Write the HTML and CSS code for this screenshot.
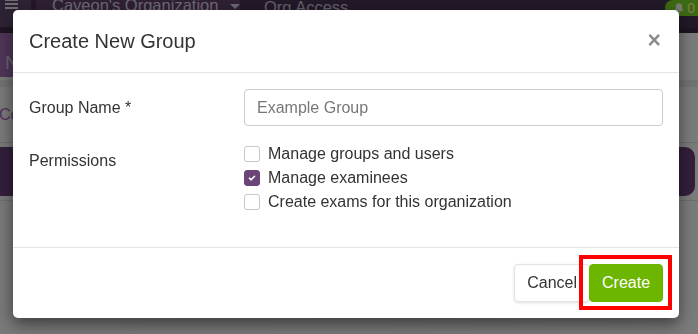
FILE: index.html
```html
<!DOCTYPE html>
<html lang="en">

<head>
  <meta charset="UTF-8" />
  <meta name="viewport" content="width=device-width, initial-scale=1.0" />
  <title>Create New Group</title>
  <link rel="stylesheet" href="styles.css">
</head>

<body>
  <div class="app">
    <header class="topbar">
      <div class="menu">
        <span class="menu-bar"></span>
        <span class="menu-bar"></span>
        <span class="menu-bar"></span>
      </div>
      <div class="org-switch">Caveon's Organization <span class="caret"></span></div>
      <a class="nav-link">Org Access</a>
      <div class="notify">
        <svg class="bell" viewBox="0 0 16 16" width="12" height="12">
          <path d="M8 1.5c-2.6 0-4.3 2-4.3 4.6v3.2L2.2 11.6v.8h11.6v-.8l-1.5-2.3V6.1C12.3 3.5 10.6 1.5 8 1.5zM6.4 13.3a1.6 1.6 0 0 0 3.2 0z" fill="currentColor" />
        </svg>
        <span class="notify-count">0</span>
      </div>
    </header>
    <div class="topbar-edge"></div>

    <div class="page-title">New Group</div>
    <div class="crumbs">
      <a class="crumb">Console</a>
    </div>
    <div class="panel-head"></div>
    <div class="panel-body"></div>
  </div>

  <div class="backdrop">
    <div class="modal">
      <div class="modal-header">
        <h4 class="modal-title">Create New Group</h4>
        <button class="close" type="button">&times;</button>
      </div>

      <div class="modal-body">
        <div class="form-row form-row-center">
          <label for="groupName" class="form-label">Group Name *</label>
          <input type="text" class="input" id="groupName" placeholder="Example Group">
        </div>

        <div class="form-row">
          <div class="form-label form-label-offset">Permissions</div>
          <div class="checks">
            <label class="check">
              <span class="box"></span>
              Manage groups and users
            </label>
            <label class="check">
              <span class="box box-on">
                <svg viewBox="0 0 10 10" width="8" height="8">
                  <path d="M1.8 5.2 4 7.3 8.2 2.8" fill="none" stroke="#fff" stroke-width="1.9" stroke-linecap="round" stroke-linejoin="round" />
                </svg>
              </span>
              Manage examinees
            </label>
            <label class="check">
              <span class="box"></span>
              Create exams for this organization
            </label>
          </div>
        </div>
      </div>

      <div class="modal-footer">
        <button class="btn btn-default" type="button">Cancel</button>
        <button class="btn btn-create" type="button">Create</button>
      </div>
    </div>
  </div>
</body>

</html>
```

FILE: styles.css
```css
:root {
  --purple: #6b4577;
  --green: #6cb600;
  --text: #333333;
  --divider: #e5e5e5;
}

* {
  box-sizing: border-box;
}

html,
body {
  margin: 0;
  height: 100%;
  overflow: hidden;
}

body {
  font-family: "Liberation Sans", Arial, sans-serif;
  font-size: 16px;
  color: var(--text);
  background-color: #eeeeee;
}

/* ---- page behind the dialog ---- */

.app {
  height: 100%;
  background: linear-gradient(to right, #f2f2f2, #eeeeee 60%, #f6f6f6);
}

.topbar {
  display: flex;
  align-items: flex-start;
  height: 28px;
  background-color: #45314f;
}

.menu {
  display: flex;
  flex-direction: column;
  gap: 2px;
  width: 31px;
  height: 100%;
  padding: 0 0 0 5px;
  margin-top: -1px;
  background-color: #5c4668;
}

.menu-bar {
  display: block;
  width: 13px;
  height: 2px;
  background-color: #e2dde6;
}

.org-switch {
  display: flex;
  align-items: flex-start;
  height: 100%;
  width: 204px;
  margin-left: 5px;
  padding: 0 0 0 16px;
  font-size: 16.5px;
  line-height: 1;
  white-space: nowrap;
  color: #d9cfe0;
  background-color: #5d4068;
  margin-top: -3px;
}

.caret {
  display: inline-block;
  margin: 7px 0 0 12px;
  border-top: 5px solid #d9cfe0;
  border-left: 5px solid transparent;
  border-right: 5px solid transparent;
}

.nav-link {
  margin: -1px 0 0 24px;
  font-size: 16.5px;
  line-height: 1;
  color: #c9bfd0;
}

.notify {
  display: flex;
  align-items: center;
  gap: 2px;
  margin-left: auto;
  height: 16px;
  padding: 0 3px 0 8px;
  border-radius: 8px 0 0 8px;
  background-color: #7ad326;
  color: #eef3e6;
}

.notify-count {
  font-size: 14px;
  color: #f4f2a0;
}

.topbar-edge {
  height: 5px;
  background-color: #3a2c42;
}

.page-title {
  width: 55%;
  height: 44px;
  padding: 20px 0 0 5px;
  font-size: 19px;
  line-height: 1;
  color: #d6c8dc;
  background-color: #a06cb2;
}

.crumbs {
  margin-top: 3px;
  height: 63px;
  border-top: 7px solid #e4e4e4;
  border-bottom: 1px solid #d8d8d8;
  display: flex;
  align-items: center;
}

.crumb {
  margin-left: -1px;
  font-size: 16px;
  color: #a262b8;
}

.panel-head {
  margin: 4px 3px 0 0;
  height: 49px;
  border-radius: 0 10px 10px 0;
  background-color: #653f76;
}

.panel-body {
  margin-top: 4px;
  border-top: 1px solid #dcdcdc;
}

/* ---- dialog ---- */

.backdrop {
  position: fixed;
  inset: 0;
  background-color: rgba(0, 0, 0, 0.5);
}

.modal {
  position: absolute;
  top: 10px;
  left: 13px;
  width: 666px;
  background-color: #ffffff;
  border-radius: 5px;
  box-shadow: 0 6px 16px rgba(0, 0, 0, 0.5);
}

.modal-header {
  display: flex;
  align-items: center;
  padding: 19px 16px 20px;
  border-bottom: 1px solid var(--divider);
}

.modal-title {
  margin: 0;
  font-size: 20px;
  font-weight: 400;
  line-height: 22px;
  color: var(--text);
}

.close {
  margin-left: auto;
  margin-right: 2px;
  padding: 0;
  border: 0;
  background: none;
  font-family: "Liberation Sans", Arial, sans-serif;
  font-size: 23px;
  font-weight: 700;
  line-height: 1;
  color: #000;
  opacity: 0.45;
  cursor: pointer;
}

.modal-body {
  display: flex;
  flex-direction: column;
  gap: 16px;
  padding: 16px 16px 33px;
}

.form-row {
  display: grid;
  grid-template-columns: 215px 1fr;
}

.form-row-center {
  align-items: center;
}

.form-label {
  color: var(--text);
}

.form-label-offset {
  padding-top: 10px;
}

.input {
  display: block;
  width: 100%;
  height: 37px;
  padding: 0 12px;
  font-family: inherit;
  font-size: 16px;
  color: var(--text);
  background-color: #fff;
  border: 1px solid #cccccc;
  border-radius: 4px;
}

.input::placeholder {
  color: #777777;
}

.checks {
  display: flex;
  flex-direction: column;
}

.check {
  display: flex;
  align-items: center;
  gap: 8px;
  height: 24px;
  line-height: 24px;
}

.box {
  display: inline-flex;
  align-items: center;
  justify-content: center;
  width: 16px;
  height: 16px;
  border: 1px solid #c8c8c8;
  border-radius: 3px;
  background-color: #fff;
}

.box-on {
  border-color: var(--purple);
  background-color: var(--purple);
}

.modal-footer {
  display: flex;
  justify-content: flex-end;
  padding: 16px;
  border-top: 1px solid var(--divider);
}

.btn {
  height: 38px;
  padding: 0 12px;
  font-family: inherit;
  font-size: 16px;
  border-radius: 4px;
  cursor: pointer;
}

.btn-default {
  margin-right: -1px;
  color: var(--text);
  background-color: #fff;
  border: 1px solid #e3e3e3;
  box-shadow: 0 1px 3px rgba(0, 0, 0, 0.12);
}

.btn-create {
  position: relative;
  width: 74px;
  color: #fff;
  background-color: var(--green);
  border: 1px solid var(--green);
}

/* annotation box drawn round the Create button */
.btn-create::after {
  content: "";
  position: absolute;
  top: -10px;
  right: -10px;
  bottom: -9px;
  left: -11px;
  border: 4px solid #ff0000;
}
```
